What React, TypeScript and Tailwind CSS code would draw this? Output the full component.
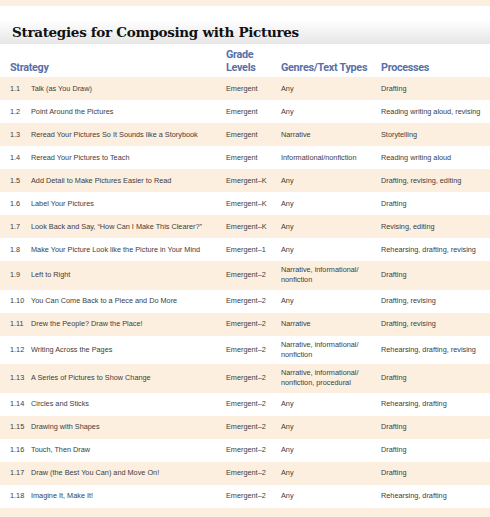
type Row = {
  num: string;
  name: string;
  grade: string;
  genre: string;
  process: string;
  tall?: boolean;
};

const rows: Row[] = [
  { num: "1.1", name: "Talk (as You Draw)", grade: "Emergent", genre: "Any", process: "Drafting" },
  { num: "1.2", name: "Point Around the Pictures", grade: "Emergent", genre: "Any", process: "Reading writing aloud, revising" },
  { num: "1.3", name: "Reread Your Pictures So It Sounds like a Storybook", grade: "Emergent", genre: "Narrative", process: "Storytelling" },
  { num: "1.4", name: "Reread Your Pictures to Teach", grade: "Emergent", genre: "Informational/nonfiction", process: "Reading writing aloud" },
  { num: "1.5", name: "Add Detail to Make Pictures Easier to Read", grade: "Emergent–K", genre: "Any", process: "Drafting, revising, editing" },
  { num: "1.6", name: "Label Your Pictures", grade: "Emergent–K", genre: "Any", process: "Drafting" },
  { num: "1.7", name: "Look Back and Say, “How Can I Make This Clearer?”", grade: "Emergent–K", genre: "Any", process: "Revising, editing" },
  { num: "1.8", name: "Make Your Picture Look like the Picture in Your Mind", grade: "Emergent–1", genre: "Any", process: "Rehearsing, drafting, revising" },
  { num: "1.9", name: "Left to Right", grade: "Emergent–2", genre: "Narrative, informational/ nonfiction", process: "Drafting", tall: true },
  { num: "1.10", name: "You Can Come Back to a Piece and Do More", grade: "Emergent–2", genre: "Any", process: "Drafting, revising" },
  { num: "1.11", name: "Drew the People? Draw the Place!", grade: "Emergent–2", genre: "Narrative", process: "Drafting, revising" },
  { num: "1.12", name: "Writing Across the Pages", grade: "Emergent–2", genre: "Narrative, informational/ nonfiction", process: "Rehearsing, drafting, revising", tall: true },
  { num: "1.13", name: "A Series of Pictures to Show Change", grade: "Emergent–2", genre: "Narrative, informational/ nonfiction, procedural", process: "Drafting", tall: true },
  { num: "1.14", name: "Circles and Sticks", grade: "Emergent–2", genre: "Any", process: "Rehearsing, drafting" },
  { num: "1.15", name: "Drawing with Shapes", grade: "Emergent–2", genre: "Any", process: "Drafting" },
  { num: "1.16", name: "Touch, Then Draw", grade: "Emergent–2", genre: "Any", process: "Drafting" },
  { num: "1.17", name: "Draw (the Best You Can) and Move On!", grade: "Emergent–2", genre: "Any", process: "Drafting" },
  { num: "1.18", name: "Imagine It, Make It!", grade: "Emergent–2", genre: "Any", process: "Rehearsing, drafting" },
];

const cols = "grid grid-cols-[21px_195px_55px_100px_1fr] pl-[10px]";

export default function App() {
  return (
    <div className="w-[490px] h-[517px] overflow-hidden bg-white font-['Liberation_Sans',Arial,sans-serif]">
      <div className="h-[6px] bg-[#fcefdf]" />
      <div className="mt-[14px] h-[24px] bg-gradient-to-b from-white to-[#e6e6e6] pl-[12px] flex items-center">
        <h1 className="font-['DejaVu_Serif',serif] font-bold text-[13.5px] tracking-[-0.3px] text-[#111] leading-none pt-[1px]">
          Strategies for Composing with Pictures
        </h1>
      </div>
      <div className={`${cols} h-[33px] items-end pb-[3px] text-[10.8px] tracking-[-0.3px] font-bold text-[#5870a8] leading-[13px] font-['Roboto',sans-serif]`}>
        <div className="col-span-2">Strategy</div>
        <div>
          Grade
          <br />
          Levels
        </div>
        <div>Genres/Text Types</div>
        <div>Processes</div>
      </div>
      {rows.map((r, i) => (
        <div
          key={r.num}
          className={`${cols} items-center text-[7.3px] leading-[10px] text-[#3d3d3d] ${
            r.tall ? "h-[28.5px]" : "h-[23px]"
          } ${i % 2 === 0 ? "bg-[#fcefdf]" : "bg-white"}`}
        >
          <div>{r.num}</div>
          <div>{r.name}</div>
          <div>{r.grade}</div>
          <div className="pr-[12px]">{r.genre}</div>
          <div>{r.process}</div>
        </div>
      ))}
      <div className="h-[12px] bg-[#fcefdf]" />
    </div>
  );
}
